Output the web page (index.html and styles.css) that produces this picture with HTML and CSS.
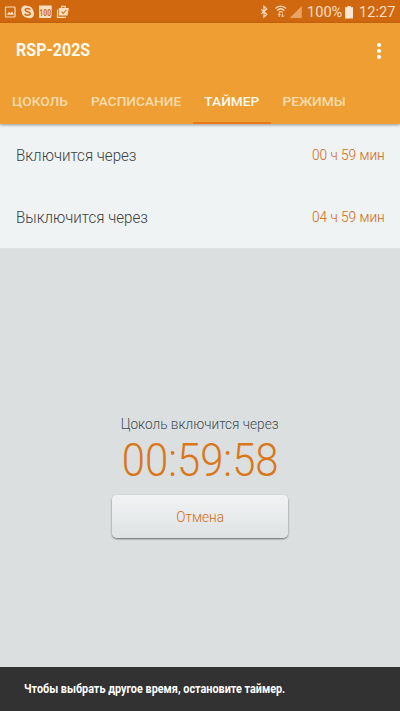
FILE: index.html
```html
<!DOCTYPE html>
<html lang="ru">
<head>
<meta charset="utf-8">
<title>RSP-202S</title>
<link rel="stylesheet" href="styles.css">
</head>
<body>
<div class="app">
  <div class="status">
    <svg class="status-left" width="72" height="23" viewBox="0 0 72 23">
      <rect x="5.5" y="7" width="9.5" height="10" rx=".8" fill="none" stroke="#f9dfc4" stroke-width="1.2"/>
      <path d="M6.8 14.8l2.2-3 1.5 1.5 1.5-1.8 2 3.3z" fill="#f9dfc4"/>
      <circle cx="25.4" cy="9.6" r="4.2" fill="#f9dfc4"/><circle cx="29.8" cy="14" r="4.2" fill="#f9dfc4"/><circle cx="27.6" cy="11.8" r="5.9" fill="#f9dfc4"/>
      <path d="M30.2 9.8C29.7 8 25.2 8 25.2 10.1c0 2.2 5 1.2 5 3.5 0 2.3-5 2.2-5.3.1" fill="none" stroke="#cf6a12" stroke-width="1.5"/>
      <path d="M39 5.5h12.7v9.5l-1 3H39z" fill="#f9dfc4"/>
      <text class="badge" x="39.3" y="15.5" textLength="12" lengthAdjust="spacingAndGlyphs">100</text>
      <path d="M57.5 9.8v7.5h8.5" fill="none" stroke="#f9dfc4" stroke-width="1.2"/>
      <path d="M61.6 8V6.4h3.5V8" fill="none" stroke="#f9dfc4" stroke-width="1.1"/>
      <path d="M58.8 8h10l-1.2 7.6h-8.8z" fill="#f9dfc4"/>
      <path d="M61.6 11.7l1.7 1.8 3-3.5" fill="none" stroke="#cf6a12" stroke-width="1.1"/>
    </svg>
    <div class="status-right">
      <svg width="44" height="23" viewBox="0 0 44 23" fill="none" stroke="#f9dfc4">
        <path d="M2.2 9.3l5.6 5L5 17V6.3l2.8 2.6-5.6 5" stroke-width="1.2"/>
        <path d="M16.4 8.5c3-3.2 7.6-3.2 10.6 0M18 10.6c2.2-2.2 5.2-2.2 7.4 0M19.8 12.4c1.2-1 2.6-1 3.8 0" stroke-width="1.2"/>
        <path d="M20.2 17v-3.4m-1.3 1.3l1.3-1.4 1.3 1.4M23.6 13.6V17m-1.3-1.4l1.3 1.4 1.3-1.4" stroke-width=".9"/>
        <path d="M42.8 6v12h-12z" fill="#e9a468" stroke="none"/>
      </svg>
      <span class="percent">100%</span>
      <svg class="battery" width="8" height="13" viewBox="0 0 8 13"><path d="M2.3 0h3.4v1.3H8V12.5H0V1.3h2.3z" fill="#fbe8d4"/></svg>
      <span class="clock">12:27</span>
    </div>
  </div>
  <header class="header">
    <div class="bar">
      <h1 class="title">RSP-202S</h1>
      <svg width="6" height="18" viewBox="0 0 6 18" fill="#fff"><circle cx="3" cy="3" r="2.1"/><circle cx="3" cy="9" r="2.1"/><circle cx="3" cy="15" r="2.1"/></svg>
    </div>
    <nav class="tabs">
      <span class="tab">ЦОКОЛЬ</span>
      <span class="tab">РАСПИСАНИЕ</span>
      <span class="tab active">ТАЙМЕР</span>
      <span class="tab">РЕЖИМЫ</span>
    </nav>
  </header>
  <section class="rows">
    <div class="row"><span class="label">Включится через</span><span class="value">00 ч 59 мин</span></div>
    <div class="row"><span class="label">Выключится через</span><span class="value">04 ч 59 мин</span></div>
  </section>
  <main class="main">
    <div class="caption">Цоколь включится через</div>
    <div class="countdown">00:59:58</div>
    <button class="cancel"><span>Отмена</span></button>
  </main>
  <footer class="snackbar"><span>Чтобы выбрать другое время, остановите таймер.</span></footer>
</div>
</body>
</html>
```
FILE: styles.css
```css
* { box-sizing: border-box; }
body { margin: 0; font-family: Roboto, sans-serif; }
.app { width: 400px; height: 711px; display: flex; flex-direction: column; background: #dbdfe0; overflow: hidden; }
span, .caption, .countdown, .title { white-space: nowrap; }
.status { height: 23px; flex: none; display: flex; justify-content: space-between; background: #d0680f; color: #f9dfc4; }
.badge { font: bold 9px Roboto, sans-serif; fill: #cf6a12; }
.status-right { display: flex; align-items: center; padding-right: 4px; font-size: 14.6px; line-height: 23px; }
.percent { width: 35px; margin-left: 4px; padding-top: 1px; }
.battery { margin: 1px 6px 0 3px; }
.clock { width: 37px; padding-top: 1px; }
.header { height: 101px; flex: none; position: relative; background: #ee9e32; box-shadow: 0 1px 3px rgba(0,0,0,.4); }
.bar { height: 55px; display: flex; align-items: center; justify-content: space-between; padding: 0 18px 0 16px; }
.title { margin: -3px 0 0; color: #fffaf0; font-size: 18px; font-weight: 700; transform: scaleX(.89); transform-origin: left; }
.tabs { display: flex; height: 46px; padding-left: .5px; }
.tab { padding: 0 11.6px; height: 46px; line-height: 47px; font-size: 13.7px; font-weight: 500; color: #fbdcae; }
.tab.active { color: #fffaf0; border-bottom: 2px solid #ed7a1a; }
.rows { height: 125px; flex: none; background: #eff3f4; border-bottom: 1px solid #e0e4e5; }
.row { height: 62px; display: flex; align-items: center; justify-content: space-between; padding: 0 15px 0 16px; }
.label { font-size: 17.3px; font-weight: 300; color: #3c4043; transform: scaleX(.875); transform-origin: left; }
.value { font-size: 15.5px; font-weight: 300; color: #cf6812; transform: scaleX(.88); transform-origin: right; }
.main { flex: 1; display: flex; flex-direction: column; align-items: center; padding-top: 165px; }
.caption { height: 20px; line-height: 20px; font-size: 15.3px; font-weight: 300; color: #444c50; transform: scaleX(.89); }
.countdown { height: 54px; line-height: 52px; font-size: 46.5px; font-weight: 300; color: #d9771a; transform: scaleX(.9); }
.cancel { width: 176px; height: 43px; margin: 7px 0 0; padding: 0; border: 0; border-radius: 5px; background: linear-gradient(#f1f3f3, #dfe2e3); box-shadow: 0 1px 2px rgba(0,0,0,.55); font: 300 15.5px Roboto, sans-serif; color: #d46c12; }
.cancel span { display: inline-block; transform: scaleX(.88); }
.snackbar { height: 44px; flex: none; padding-left: 24px; line-height: 44px; background: #323232; color: #fff; font-size: 13px; font-weight: 700; }
.snackbar span { display: inline-block; transform: scaleX(.834); transform-origin: left; }
```
